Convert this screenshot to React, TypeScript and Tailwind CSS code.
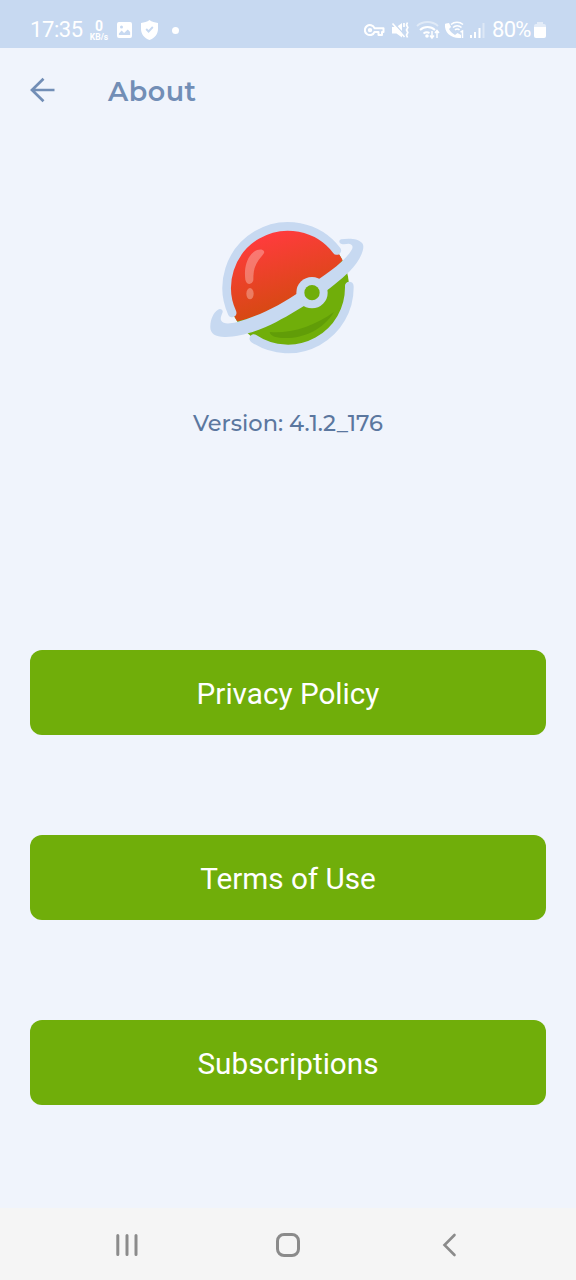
import React from 'react';

const StatusBar: React.FC = () => (
  <div className="flex h-12 shrink-0 items-end justify-between bg-[#c7d9f1] pr-[30px] pl-[30px] pb-[6px] text-white">
    <div className="flex h-6 items-center">
      <span className="w-[53px] text-[22px] leading-6 tracking-[-0.4px]">17:35</span>
      <div className="ml-[6px] flex w-5 flex-col items-center font-bold">
        <span className="text-[14px] leading-[13px]">0</span>
        <span className="text-[8.5px] leading-[8px]">KB/s</span>
      </div>
      <svg className="ml-[8px]" width="15" height="16" viewBox="0 0 16 16" preserveAspectRatio="none">
        <rect width="16" height="16" rx="2" fill="#fff" />
        <circle cx="4.800" cy="5" r="1.600" fill="#c7d9f1" />
        <path d="M2 13V11.500L5 8.500L7.500 11L11.500 7.500L14 10V13Z" fill="#c7d9f1" />
      </svg>
      <svg className="ml-[9px]" width="17" height="20" viewBox="0 0 18 20" preserveAspectRatio="none">
        <path d="M9 0C11.500 1.800 14.500 2.600 18 3V9C18 14 14.500 18 9 20C3.500 18 0 14 0 9V3C3.500 2.600 6.500 1.800 9 0Z" fill="#fff" />
        <path d="M5.500 9L8 11.500L12.500 7" fill="none" stroke="#c7d9f1" strokeWidth="2" />
      </svg>
      <span className="ml-[14px] size-[7px] rounded-full bg-white" />
    </div>

    <div className="flex h-6 items-center">
      <svg width="123" height="24" viewBox="0 0 123 24" fill="none" stroke="#fff">
        <g strokeWidth="2">
          <path d="M10.500 10.200H19.500V14H18V17H14.500V14H10.500A5 5 0 1 1 10.500 10.200Z" strokeLinejoin="round" />
          <circle cx="6" cy="12.100" r="1.200" />
        </g>
        <path d="M28 9H32.500L38 5V19.500L32.500 15.500H28Z" fill="#fff" stroke="none" />
        <path d="M29.500 4.500L41 17.500" stroke="#c7d9f1" strokeWidth="1.400" />
        <path d="M28.500 5.500L40.500 19" strokeWidth="1.700" />
        <path d="M40 5V9M43.500 4.500L42.500 7L43.800 9.500L42.500 12L43.800 14.500L42.500 17L43.500 19.500" strokeWidth="1.700" />
        <g strokeWidth="2">
          <path d="M53 8A16 16 0 0 1 74 8" opacity=".45" />
          <path d="M56 12A11 11 0 0 1 71 12" />
          <path d="M59.500 15.500A6 6 0 0 1 65.500 15" />
        </g>
        <circle cx="63" cy="18" r="1.800" fill="#fff" stroke="none" />
        <path d="M68 13V20M66 17.500L68 20L70 17.500M73 20V12.500M71 15L73 12.500L75 15" strokeWidth="1.500" />
        <path d="M82 5.500L85 5L87 9L85 11C86.500 14 88.500 15.500 91 17L93.500 15L97 17V20C88 21 80 15 81 6Z" fill="#fff" stroke="none" />
        <path d="M87 6.500A9 9 0 0 1 99 6.500M89 9.500A6 6 0 0 1 97.500 9.500M91 12A3 3 0 0 1 95.500 12" strokeWidth="1.500" />
        <path d="M96.500 14L98.500 13V20" strokeWidth="1.500" />
        <path d="M107 17V20M111 14V20M115.500 10V20" strokeWidth="2" />
        <path d="M119.500 5V20" strokeWidth="2" opacity=".4" />
      </svg>
      <span className="ml-[5px] w-10 text-[22px] leading-6 tracking-[-0.7px]">80%</span>
      <svg className="ml-[2px]" width="12" height="18" viewBox="0 0 12 18" fill="#fff">
        <path d="M3 1H9V3H10A2 2 0 0 1 12 5V6H0V5A2 2 0 0 1 2 3H3Z" opacity=".5" />
        <path d="M0 6H12V15A2 2 0 0 1 10 17H2A2 2 0 0 1 0 15Z" />
      </svg>
    </div>
  </div>
);

const Logo: React.FC = () => (
  <svg className="ml-1" width="180" height="155" viewBox="0 0 540 465">
    <defs>
      <linearGradient id="red" x1="210" y1="70" x2="280" y2="300" gradientUnits="userSpaceOnUse">
        <stop offset="0" stopColor="#ff3b3d" />
        <stop offset="1" stopColor="#d44a10" />
      </linearGradient>
    </defs>
    <circle cx="264" cy="233" r="183" fill="#70ae0a" />
    <path d="M111.500 334A183 183 0 1 1 427.500 150.500C370 220 220 310 111.500 334Z" fill="url(#red)" />
    <path d="M209 366C270 371 340 351 402 306C365 366 297 390 238 383C221 381 211 376 209 366Z" fill="#619d08" />
    <path d="M191 122C195 127 191 132 185 139C163 164 160 182 160 211C156 226 139 225 136 209C132 178 138 145 160 127C171 117 185 116 191 122Z" fill="#fff" opacity=".3" />
    <ellipse cx="150" cy="251" rx="11" ry="17" fill="#fff" opacity=".3" />
    <g fill="none" stroke="#c7d9f1" strokeWidth="26" strokeLinecap="round">
      <path d="M96.400 308.700A184 184 0 0 1 410.500 121.600" />
      <path d="M447.900 228A184 184 0 0 1 161.500 385.800" />
    </g>
    <path
      d="M54 299C60 294 69 298 68 306C66 314 60 322 63 331C69 344 91 341 109 337C174 319 242 285 304 242C348 213 405 178 438 142C455 123 463 111 454 104C446 98 436 105 425 102C416 100 416 91 423 88C446 84 477 85 488 101C497 118 475 158 449 184C395 237 306 296 229 336C174 364 116 382 74 381C44 380 29 370 31 347C32 327 40 308 54 299Z"
      fill="#c7d9f1"
    />
    <circle cx="336" cy="248" r="47" fill="#c7d9f1" />
    <circle cx="336" cy="248" r="23" fill="#70ae0a" />
  </svg>
);

const App: React.FC = () => {
  const links = ['Privacy Policy', 'Terms of Use', 'Subscriptions'];

  return (
    <div className="flex h-[1280px] w-[576px] flex-col overflow-hidden bg-[#f0f4fc] font-['Roboto',sans-serif]">
      <StatusBar />

      <header className="flex h-[86px] shrink-0 items-center pl-[30px] text-[#728eb6]">
        <svg className="mb-[2px]" width="26" height="26" viewBox="0 0 26 26" fill="none" stroke="currentColor" strokeWidth="2.7">
          <path d="M24.500 13H2M13.500 1.800L2 13L13.500 24.200" />
        </svg>
        <h1 className="ml-[52px] pt-[2px] font-['Montserrat','Inter',sans-serif] text-[27px] font-semibold tracking-[0.5px]">About</h1>
      </header>

      <main className="flex grow flex-col items-center px-[30px] pt-[76px]">
        <Logo />
        <p className="mt-[41px] mb-[209px] font-['Montserrat','Inter',sans-serif] text-[22.5px] leading-[35px] font-medium text-[#5b779f]">
          Version: 4.1.2_176
        </p>
        <div className="flex w-full flex-col gap-[100px]">
          {links.map((label) => (
            <button key={label} className="h-[85px] w-full rounded-xl bg-[#70ae0a] pt-1 text-[29.7px] text-white">
              {label}
            </button>
          ))}
        </div>
      </main>

      <nav className="flex h-[72px] shrink-0 items-center justify-between bg-[#f5f5f5] px-[115px] pt-px">
        <svg width="24" height="24" viewBox="0 0 24 24" stroke="#8b8b8b" strokeWidth="3" strokeLinecap="round">
          <path d="M2.800 2.500V21.500M12 2.500V21.500M21 2.500V21.500" />
        </svg>
        <svg width="26" height="26" viewBox="0 0 26 26" fill="none" stroke="#8b8b8b" strokeWidth="3">
          <rect x="2.500" y="2.500" width="21" height="21" rx="6.500" />
        </svg>
        <svg width="24" height="24" viewBox="0 0 24 24" fill="none" stroke="#8b8b8b" strokeWidth="2.600" strokeLinecap="round">
          <path d="M17.500 2L7.500 12L17.500 22" />
        </svg>
      </nav>
    </div>
  );
};

export default App;
